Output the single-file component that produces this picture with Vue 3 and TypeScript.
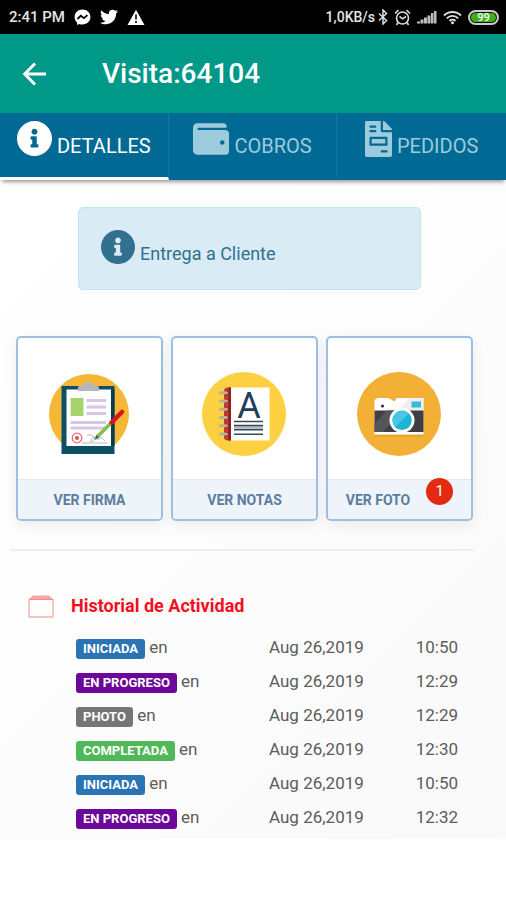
<script setup lang="ts">
import { ref } from 'vue'

interface Activity {
  label: string
  kind: 'started' | 'progress' | 'photo' | 'done'
  date: string
  time: string
}

const activeTab = ref<number>(0)

const activities: Activity[] = [
  { label: 'INICIADA', kind: 'started', date: 'Aug 26,2019', time: '10:50' },
  { label: 'EN PROGRESO', kind: 'progress', date: 'Aug 26,2019', time: '12:29' },
  { label: 'PHOTO', kind: 'photo', date: 'Aug 26,2019', time: '12:29' },
  { label: 'COMPLETADA', kind: 'done', date: 'Aug 26,2019', time: '12:30' },
  { label: 'INICIADA', kind: 'started', date: 'Aug 26,2019', time: '10:50' },
  { label: 'EN PROGRESO', kind: 'progress', date: 'Aug 26,2019', time: '12:32' },
]

const infoPath =
  'M256 8C119.043 8 8 119.083 8 256c0 136.997 111.043 248 248 248s248-111.003 248-248C504 119.083 392.957 8 256 8zm0 110c23.196 0 42 18.804 42 42s-18.804 42-42 42-42-18.804-42-42 18.804-42 42-42zm56 254c0 6.627-5.373 12-12 12h-88c-6.627 0-12-5.373-12-12v-24c0-6.627 5.373-12 12-12h12v-64h-12c-6.627 0-12-5.373-12-12v-24c0-6.627 5.373-12 12-12h64c6.627 0 12 5.373 12 12v100h12c6.627 0 12 5.373 12 12v24z'
const walletPath =
  'M461.2 128H80c-8.84 0-16-7.16-16-16s7.16-16 16-16h384c8.84 0 16-7.16 16-16 0-26.51-21.49-48-48-48H64C28.65 32 0 60.65 0 96v320c0 35.35 28.65 64 64 64h397.2c28.02 0 50.8-21.53 50.8-48V176c0-26.47-22.78-48-50.8-48zM416 336c-17.67 0-32-14.33-32-32s14.33-32 32-32 32 14.33 32 32-14.33 32-32 32z'
const invoicePath =
  'M288 256H96v64h192v-64zm89-151L279.1 7c-4.5-4.5-10.6-7-17-7H256v128h128v-6.1c0-6.3-2.5-12.4-7-16.9zm-153 31V0H24C10.7 0 0 10.7 0 24v464c0 13.3 10.7 24 24 24h336c13.3 0 24-10.7 24-24V160H248c-13.2 0-24-10.8-24-24zM64 72c0-4.42 3.58-8 8-8h80c4.42 0 8 3.58 8 8v16c0 4.42-3.58 8-8 8H72c-4.42 0-8-3.58-8-8V72zm0 64c0-4.42 3.58-8 8-8h80c4.42 0 8 3.58 8 8v16c0 4.42-3.58 8-8 8H72c-4.42 0-8-3.58-8-8v-16zm256 304c0 4.42-3.58 8-8 8h-80c-4.42 0-8-3.58-8-8v-16c0-4.42 3.58-8 8-8h80c4.42 0 8 3.58 8 8v16zm0-200v96c0 8.84-7.16 16-16 16H80c-8.84 0-16-7.16-16-16v-96c0-8.84 7.16-16 16-16h224c8.84 0 16 7.16 16 16z'

const tabs = [
  { label: 'DETALLES', path: infoPath, viewBox: '8 8 496 496', width: 35, height: 35 },
  { label: 'COBROS', path: walletPath, viewBox: '0 0 512 512', width: 36, height: 36 },
  { label: 'PEDIDOS', path: invoicePath, viewBox: '0 0 384 512', width: 27, height: 36 },
]

const ringOffsets = [20.7, 29, 37.3, 45.5, 53.8, 62]
</script>

<template>
  <div class="page">
    <div class="status">
      <div class="status-group">
        <span>2:41 PM</span>
        <svg width="17" height="17" viewBox="0 0 17 17">
          <path fill="#fff" d="M8.5.5C4 .5.6 3.7.6 8c0 2.3.9 4.2 2.5 5.6V16l2.2-1.100c1 .4 2.100.5 3.200.5 4.500 0 7.900-3.200 7.900-7.400S13 .5 8.500.5z" />
          <path fill="none" stroke="#000" stroke-width="1.8" d="M3.500 10l3.300-3.200 3.200 2.400 3.400-3" />
        </svg>
        <svg width="18" height="18" viewBox="0 0 512 512">
          <path fill="#fff" d="M459.370 151.716c.325 4.548.325 9.097.325 13.645 0 138.720-105.583 298.558-298.558 298.558-59.452 0-114.680-17.219-161.137-47.106 8.447.974 16.568 1.299 25.340 1.299 49.055 0 94.213-16.568 130.274-44.832-46.132-.975-84.792-31.188-98.112-72.772 6.498.974 12.995 1.624 19.818 1.624 9.421 0 18.843-1.300 27.614-3.573-48.081-9.747-84.143-51.980-84.143-102.985v-1.299c13.969 7.797 30.214 12.670 47.431 13.319-28.264-18.843-46.781-51.005-46.781-87.391 0-19.492 5.197-37.360 14.294-52.954 51.655 63.675 129.300 105.258 216.365 109.807-1.624-7.797-2.599-15.918-2.599-24.040 0-57.828 46.782-104.934 104.934-104.934 30.213 0 57.502 12.670 76.670 33.137 23.715-4.548 46.456-13.320 66.599-25.340-7.798 24.366-24.366 44.833-46.132 57.827 21.117-2.273 41.584-8.122 60.426-16.243-14.292 20.791-32.161 39.308-52.628 54.253z" />
        </svg>
        <svg width="18" height="17" viewBox="0 0 18 17">
          <path fill="#fff" d="M9 .8L17.500 16H.5z" />
          <path fill="#333" d="M8 5.500h2v5H8zM8 12h2v2H8z" />
        </svg>
      </div>
      <div class="status-group right">
        <span>1,0KB/s</span>
        <svg width="10" height="16" viewBox="0 0 10 16">
          <path fill="none" stroke="#ddd" stroke-width="1.5" d="M1 4.500l7.500 7L5 15V1l3.500 3.500L1 11.500" />
        </svg>
        <svg width="17" height="17" viewBox="0 0 17 17">
          <circle cx="8.5" cy="9" r="6" fill="none" stroke="#ddd" stroke-width="1.6" />
          <path fill="none" stroke="#ddd" stroke-width="1.6" d="M1 4.500L4.500 1M16 4.500L12.500 1M5.500 7.500l3 2.300L12 7.500M4 13.500L2.500 16M13 13.500l1.500 2.500" />
        </svg>
        <svg width="20" height="14" viewBox="0 0 20 14">
          <path fill="#bbb" d="M0 11.500h3v2H0zM3.500 9.500h3v4h-3zM7 7.500h3v6H7zM10.500 5.500h3v8h-3zM14 3h2.500v10.500H14zM17 1h2.500v12.500H17z" />
        </svg>
        <svg width="19" height="15" viewBox="0 0 19 15">
          <path fill="none" stroke="#ddd" stroke-width="1.900" d="M1 5.500a12 12 0 0 1 17 0M3.800 8.300a8 8 0 0 1 11.400 0M6.500 11a4.300 4.300 0 0 1 6 0" />
          <circle cx="9.5" cy="12.8" r="1.5" fill="#ddd" />
        </svg>
        <span class="battery">99</span>
      </div>
    </div>

    <header class="appbar">
      <button class="back" type="button" aria-label="Volver">
        <svg width="24" height="24" viewBox="0 0 24 24">
          <path fill="none" stroke="#fff" stroke-width="3" d="M24 12H3M13 1.500L2.700 12 13 22.500" />
        </svg>
      </button>
      <h1>Visita:64104</h1>
    </header>

    <nav class="tabs" role="tablist">
      <button
        v-for="(tab, i) in tabs"
        :key="tab.label"
        type="button"
        role="tab"
        class="tab"
        :class="{ active: activeTab === i }"
        :aria-selected="activeTab === i"
        @click="activeTab = i"
      >
        <svg :width="tab.width" :height="tab.height" :viewBox="tab.viewBox"><path fill="currentColor" :d="tab.path" /></svg>
        <span>{{ tab.label }}</span>
      </button>
    </nav>

    <main class="content">
      <div class="notice">
        <svg width="34" height="34" viewBox="8 8 496 496"><path fill="currentColor" :d="infoPath" /></svg>
        <span>Entrega a Cliente</span>
      </div>

      <section class="cards">
        <button class="card" type="button">
          <span class="picture">
            <svg width="85" height="86" viewBox="0 0 85 86">
              <circle cx="42" cy="43" r="40" fill="#f6b737" />
              <path fill="#0c5067" d="M14.500 15h53v68h-53z" />
              <path fill="#fff" d="M19.500 18.500H64V75H19.500z" />
              <path fill="#083d50" d="M64 18.500h3.500V75H64z" />
              <path fill="#b4b6bb" d="M31 20v-3q0-2.500 3-2.500h2q1.500-3.500 5.500-3.500t5.500 3.500h2q3 0 3 2.500v3z" />
              <path fill="#a5d46b" d="M23.500 27h13v18h-13z" />
              <path fill="#d5c7e5" d="M39.500 28H59v3H39.500zM39.500 34.500H59v3H39.500zM39.500 41H59v3H39.500zM23.500 50H59v3H23.500zM23.500 55.500H59v3H23.500z" />
              <circle cx="30" cy="67" r="4.8" fill="none" stroke="#f06b74" stroke-width="1.3" />
              <circle cx="30" cy="67" r="2" fill="#ea4c58" />
              <path fill="none" stroke="#a3aeb3" stroke-width=".8" d="M35 72h25M40 64q5-1 7 2t-3 5q-2-1 2-4t5 2l3-3 4 4" />
              <path stroke="#83c341" stroke-width="3.5" d="M64 52L51 65" />
              <path fill="#56635b" d="M49.500 63.500l3 3L47.500 69z" />
              <path stroke="#d9141e" stroke-width="4.5" stroke-linecap="round" d="M75 41L64.500 51.500" />
            </svg>
          </span>
          <span class="caption">VER FIRMA</span>
        </button>
        <button class="card" type="button">
          <span class="picture">
            <svg width="85" height="86" viewBox="0 0 85 86">
              <circle cx="42" cy="43" r="42" fill="#fdd041" />
              <g transform="translate(0 1)">
                <path fill="#c8362c" d="M22 19q0-3.500 4-3.500h3v53h-3q-4 0-4-3.500z" />
                <path fill="#8e211c" d="M26.500 15.500H29v53h-2.500z" />
                <path fill="#fff" d="M29 15.500h38.500v53H29z" />
                <g v-for="y in ringOffsets" :key="y">
                  <circle cx="24.5" :cy="y" r="2" fill="#5d2b20" />
                  <path stroke="#b5b19a" stroke-width="3" stroke-linecap="round" :d="`M18.500 ${y}h6`" />
                </g>
                <text x="47" y="45.5" text-anchor="middle" class="letter">A</text>
                <path fill="#b9bdc1" d="M32 53h29v5H32z" />
                <path stroke="#35495a" stroke-width="1.400" d="M32 49.500h29M32 53.500h29M32 57.700h29M32 62.300h29" />
              </g>
            </svg>
          </span>
          <span class="caption">VER NOTAS</span>
        </button>
        <button class="card" type="button">
          <span class="picture">
            <svg width="85" height="86" viewBox="0 0 85 86">
              <circle cx="42" cy="43" r="42" fill="#f2b136" />
              <g transform="translate(0 1)">
                <path fill="#fff" d="M17.500 27.500h2v-1.500h13v1.500h2.500l1 1.500h2l1.500-3h27v36.500h-49z" />
                <path fill="#f0eee9" d="M40 38.500l12-12h14.500v12z" />
                <path fill="#403e42" d="M17.500 38.500h49V60h-49z" />
                <path fill="#56555a" d="M30 38.500h17L25.500 60h-8v-9z" />
                <path fill="#e2a02c" d="M18 63h48v1.500H18z" />
                <circle cx="45" cy="48.300" r="12.5" fill="#fff" />
                <circle cx="45" cy="48.300" r="9.7" fill="#1fb3d5" />
                <path fill="#49c8e3" d="M38.200 55.100a9.700 9.700 0 0 1 13.700-13.700z" />
                <path fill="#36bcd9" d="M54.500 29.500h9.500v6h-9.500z" />
                <circle cx="25.5" cy="34" r="1.6" fill="#333" />
              </g>
            </svg>
          </span>
          <span class="caption">VER FOTO <span class="count">1</span></span>
        </button>
      </section>

      <hr class="divider" />

      <section class="history">
        <h2>
          <svg width="26" height="23" viewBox="0 0 26 23">
            <path fill="#f9a5a5" d="M5 .5h16l4.500 4H.5z" />
            <path fill="none" stroke="#f28b8b" stroke-width="1" d="M1 4.500h24v17.500H1z" />
          </svg>
          <span>Historial de Actividad</span>
        </h2>
        <table>
          <tbody>
            <tr v-for="(item, i) in activities" :key="i">
              <td class="state"><span class="badge" :class="item.kind">{{ item.label }}</span> en</td>
              <td class="date">{{ item.date }}</td>
              <td class="time">{{ item.time }}</td>
            </tr>
          </tbody>
        </table>
      </section>
    </main>
  </div>
</template>

<style>
body {
  margin: 0;
  background: #fff;
}
</style>

<style scoped>
.page {
  font-family: Roboto, "Liberation Sans", sans-serif;
  color: #5c5c5c;
}
svg {
  display: block;
  flex: none;
}
button {
  font-family: inherit;
  border: 0;
  padding: 0;
  background: none;
  cursor: pointer;
}
.status {
  display: flex;
  justify-content: space-between;
  align-items: center;
  height: 34px;
  padding: 0 7px 0 9px;
  background: #000;
  color: #e4e4e4;
  font-size: 15px;
  font-weight: 500;
}
.status-group {
  display: flex;
  align-items: center;
  gap: 9px;
}
.status-group.right {
  gap: 6px;
  font-size: 14px;
}
.status-group.right span:first-child {
  margin-right: -3px;
}
.battery {
  box-sizing: border-box;
  width: 31px;
  height: 15px;
  border: 2px solid #ccc;
  border-radius: 8px;
  background: #3fae1c;
  box-shadow: inset 0 0 0 1px #111;
  color: #fff;
  font-size: 11px;
  line-height: 11px;
  text-align: center;
}
.appbar {
  display: flex;
  align-items: center;
  gap: 56px;
  height: 79px;
  padding: 0 22px;
  background: #009887;
  color: #fff;
}
h1 {
  margin: 0;
  font-size: 28px;
  font-weight: 500;
  line-height: 36px;
}
.tabs {
  display: grid;
  grid-template-columns: repeat(3, 1fr);
  position: relative;
  background: #006a94;
  box-shadow: 0 4px 4px -2px #999;
}
.tab {
  display: flex;
  justify-content: center;
  gap: 5px;
  height: 67px;
  padding-top: 8px;
  box-sizing: border-box;
  border-right: 1px solid #0778ac;
  border-bottom: 3px solid transparent;
  color: #9ccbdd;
  font-size: 20px;
}
.tab:last-child {
  border-right: 0;
}
.tab span {
  padding-top: 13px;
  line-height: 24px;
}
.tab.active {
  border-bottom-color: #fff;
  color: #fff;
}
.content {
  padding: 27px 0 5px;
  background: linear-gradient(135deg, #fff, #f9f9f9);
}
.notice {
  display: flex;
  gap: 5px;
  margin: 0 85px 0 78px;
  padding: 22px;
  border: 1px solid #bce8f1;
  border-radius: 5px;
  background: #d9ebf5;
  color: #31708f;
  font-size: 18px;
  line-height: 24px;
}
.notice span {
  padding-top: 12px;
}
.notice svg {
  margin-bottom: 3px;
}
.cards {
  display: grid;
  grid-template-columns: repeat(3, 1fr);
  gap: 8px;
  margin: 46px 33px 0 16px;
}
.card {
  display: flex;
  flex-direction: column;
  border: 2px solid #9dc0e2;
  border-radius: 5px;
  background: #fff;
  box-shadow: 0 4px 14px rgba(0, 0, 0, 0.07);
}
.picture {
  display: flex;
  justify-content: center;
  align-self: stretch;
  padding: 33px 0 22px;
}
.caption {
  display: flex;
  justify-content: center;
  align-items: center;
  align-self: stretch;
  gap: 16px;
  height: 39px;
  border-top: 1px solid #e2e8f1;
  border-radius: 0 0 3px 3px;
  background: #eff3fa;
  color: #5a7e9f;
  font-size: 14px;
  font-weight: 700;
}
.count {
  width: 27px;
  height: 27px;
  margin-bottom: 17px;
  border-radius: 50%;
  background: #e42a10;
  color: #fff;
  font-size: 15px;
  font-weight: 400;
  line-height: 27px;
}
.letter {
  fill: #1f3f5b;
  font-size: 36px;
}
.divider {
  height: 2px;
  margin: 28px 32px 0 10px;
  border: 0;
  background: #eee;
}
.history {
  padding: 43px 44px 0 28px;
}
h2 {
  display: flex;
  align-items: center;
  gap: 17px;
  margin: 0;
  color: #f2101c;
  font-size: 18px;
  font-weight: 700;
  line-height: 24px;
}
table {
  width: 100%;
  margin-top: 12px;
  padding-left: 48px;
  border-spacing: 0;
  table-layout: fixed;
}
td {
  height: 34px;
  padding: 0;
  font-size: 17px;
  line-height: 24px;
  white-space: nowrap;
}
.state {
  width: 50%;
}
.date {
  width: 38%;
}
.badge {
  display: inline-block;
  padding: 0 7px;
  border-radius: 3px;
  color: #fff;
  font-size: 13px;
  font-weight: 700;
  line-height: 20px;
}
.started {
  background: #2a74b4;
}
.progress {
  background: #6b0799;
}
.photo {
  background: #757575;
}
.done {
  background: #4fb858;
}
</style>
